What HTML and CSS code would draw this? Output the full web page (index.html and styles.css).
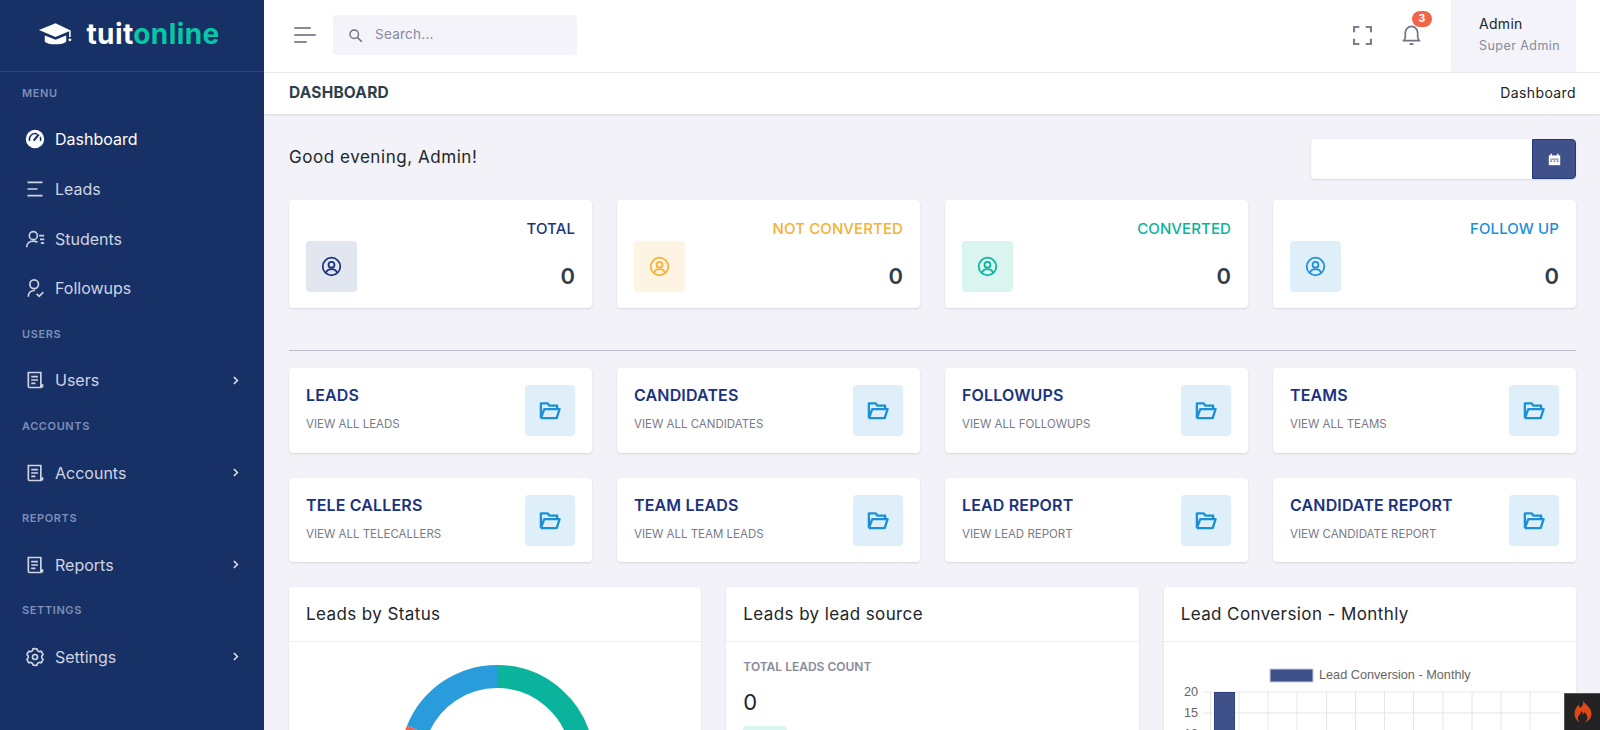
FILE: index.html
```html
<!DOCTYPE html>
<html lang="en">
<head>
<meta charset="utf-8">
<title>tuitonline - Dashboard</title>
<link rel="stylesheet" href="styles.css">
</head>
<body>
<svg class="defs" width="0" height="0" aria-hidden="true">
  <symbol id="i-user" viewBox="0 0 24 24"><circle cx="12" cy="12" r="10" fill="none" stroke="currentColor" stroke-width="2"/><circle cx="12" cy="10" r="3.4" fill="none" stroke="currentColor" stroke-width="2"/><path d="M5.6 19c1-2.600 3.400-4 6.400-4s5.400 1.400 6.400 4" fill="none" stroke="currentColor" stroke-width="2"/></symbol>
  <symbol id="i-folder" viewBox="0 0 24 24"><path d="M3 20V4.500h7l2 2.500h8v3.500" fill="none" stroke="currentColor" stroke-width="2.400" stroke-linejoin="round"/><path d="M3 20h16.500l3-9.500H6.500L3.500 19" fill="none" stroke="currentColor" stroke-width="2.400" stroke-linejoin="round"/></symbol>
  <symbol id="i-doc" viewBox="0 0 24 24"><path d="M19 17V3H4v16.500A1.500 1.500 0 0 0 5.500 21H20" fill="none" stroke="currentColor" stroke-width="2"/><path d="M7.500 8h8M7.500 12h8M7.500 16h5" stroke="currentColor" stroke-width="2"/><rect x="18" y="17" width="4" height="4" fill="currentColor"/></symbol>
  <symbol id="i-chev" viewBox="0 0 24 24"><path d="M9 5.500l6.500 6.500L9 18.500" fill="none" stroke="currentColor" stroke-width="2.800"/></symbol>
</svg>
<div class="app">
  <aside class="sidebar">
    <div class="logo">
      <svg class="logo-cap" viewBox="0 0 36 24"><path d="M18 1 1 8l17 7 14-5.800V15h1.600V8.500z" fill="#fff"/><path d="M7 13.500V20c3 3.500 19 3.500 22 0v-6.500l-11 4.500z" fill="#fff"/><circle cx="32.800" cy="18" r="1.500" fill="#fff"/></svg>
      <span class="logo-text">tuit<span class="logo-accent">online</span></span>
    </div>
    <nav class="nav">
      <div class="nav-label">MENU</div>
      <a class="nav-item active"><svg class="nav-icon" viewBox="0 0 24 24"><circle cx="12" cy="12" r="11" fill="currentColor"/><path d="M5.500 14.500a7 7 0 0 1 9-8.600M18.300 9.500a7 7 0 0 1 .2 5" fill="none" stroke="#173065" stroke-width="1.800"/><path d="M10.500 14l6-7.500" stroke="#173065" stroke-width="2.600"/></svg><span>Dashboard</span></a>
      <a class="nav-item"><svg class="nav-icon" viewBox="0 0 24 24"><path d="M3 4h18M3 12h12M3 20h18" stroke="currentColor" stroke-width="2" fill="none"/></svg><span>Leads</span></a>
      <a class="nav-item"><svg class="nav-icon" viewBox="0 0 24 24"><circle cx="10" cy="8" r="4.800" fill="none" stroke="currentColor" stroke-width="2"/><path d="M2 22c0-4.800 3.500-7.500 8-7.500 2 0 3.500.5 5 1.500" fill="none" stroke="currentColor" stroke-width="2"/><path d="M17 8h6M18 12.500h5M19 17h4" stroke="currentColor" stroke-width="2"/></svg><span>Students</span></a>
      <a class="nav-item"><svg class="nav-icon" viewBox="0 0 24 24"><circle cx="11" cy="7.500" r="5.200" fill="none" stroke="currentColor" stroke-width="2"/><path d="M4 22.500c0-4.500 3-7.500 8-7.500" fill="none" stroke="currentColor" stroke-width="2"/><path d="M14 19l3 3 5-5" fill="none" stroke="currentColor" stroke-width="2"/></svg><span>Followups</span></a>
      <div class="nav-label">USERS</div>
      <a class="nav-item"><svg class="nav-icon"><use href="#i-doc"/></svg><span>Users</span><svg class="nav-chev"><use href="#i-chev"/></svg></a>
      <div class="nav-label">ACCOUNTS</div>
      <a class="nav-item"><svg class="nav-icon"><use href="#i-doc"/></svg><span>Accounts</span><svg class="nav-chev"><use href="#i-chev"/></svg></a>
      <div class="nav-label">REPORTS</div>
      <a class="nav-item"><svg class="nav-icon"><use href="#i-doc"/></svg><span>Reports</span><svg class="nav-chev"><use href="#i-chev"/></svg></a>
      <div class="nav-label">SETTINGS</div>
      <a class="nav-item"><svg class="nav-icon" viewBox="0 0 24 24"><path d="M3.340 17a10.018 10.018 0 0 1-.978-2.326 3 3 0 0 0 .002-5.347A9.990 9.990 0 0 1 4.865 4.990a3 3 0 0 0 4.631-2.674 9.990 9.990 0 0 1 5.007.002 3 3 0 0 0 4.632 2.672c.579.59 1.093 1.261 1.525 2.010.433.749.757 1.530.978 2.326a3 3 0 0 0-.002 5.347 9.990 9.990 0 0 1-2.501 4.337 3 3 0 0 0-4.631 2.674 9.990 9.990 0 0 1-5.007-.002 3 3 0 0 0-4.632-2.672A10.018 10.018 0 0 1 3.340 17z" fill="none" stroke="currentColor" stroke-width="2" stroke-linejoin="round"/><circle cx="12" cy="12" r="3" fill="none" stroke="currentColor" stroke-width="2"/></svg><span>Settings</span><svg class="nav-chev"><use href="#i-chev"/></svg></a>
    </nav>
  </aside>
  <div class="main">
    <header class="topbar">
      <div class="hamburger"><i class="bar bar-a"></i><i class="bar bar-b"></i><i class="bar bar-c"></i></div>
      <label class="search">
        <svg class="search-icon" viewBox="0 0 24 24"><circle cx="10" cy="10" r="6.800" fill="none" stroke="currentColor" stroke-width="2.200"/><path d="M15 15l7 7" stroke="currentColor" stroke-width="2.400"/></svg>
        <input class="search-input" type="text" placeholder="Search...">
      </label>
      <div class="top-actions">
        <svg class="fs-icon" viewBox="0 0 18 18"><path d="M1 6V1h5M12 1h5v5M17 12v5h-5M6 17H1v-5" fill="none" stroke="currentColor" stroke-width="2"/></svg>
        <div class="bell">
          <svg class="bell-icon" viewBox="0 0 20 22"><path d="M1.500 16.500c1.500-1 2-2.500 2-4.500V8a6.500 6.500 0 0 1 13 0v4c0 2 .5 3.500 2 4.500z" fill="none" stroke="currentColor" stroke-width="1.800" stroke-linejoin="round"/><path d="M8 20h4" stroke="currentColor" stroke-width="2"/></svg>
          <span class="badge">3</span>
        </div>
        <div class="profile">
          <span class="profile-name">Admin</span>
          <span class="profile-role">Super Admin</span>
        </div>
      </div>
    </header>
    <div class="crumbs">
      <h1 class="crumb-title">DASHBOARD</h1>
      <span class="crumb-link">Dashboard</span>
    </div>
    <main class="content">
      <div class="greet-row">
        <p class="greet">Good evening, Admin!</p>
        <div class="date">
          <input class="date-input" type="text">
          <button class="date-btn" type="button"><svg viewBox="0 0 16 16" width="13" height="13"><path d="M1 3h14v12H1z" fill="#fff"/><path d="M4 1v3M12 1v3" stroke="#fff" stroke-width="1.800"/><path d="M3 7.500h10" stroke="#405189" stroke-width="1"/><path d="M3 10h2M7 10h2M11 10h2" stroke="#405189" stroke-width="1.800"/></svg></button>
        </div>
      </div>
      <section class="grid4">
        <div class="card stat"><div class="stat-title c-navy">TOTAL</div><div class="stat-row"><div class="ibox t-navy"><svg class="stat-icon"><use href="#i-user"/></svg></div><div class="stat-num">0</div></div></div>
        <div class="card stat"><div class="stat-title c-amber">NOT CONVERTED</div><div class="stat-row"><div class="ibox t-amber"><svg class="stat-icon"><use href="#i-user"/></svg></div><div class="stat-num">0</div></div></div>
        <div class="card stat"><div class="stat-title c-green">CONVERTED</div><div class="stat-row"><div class="ibox t-green"><svg class="stat-icon"><use href="#i-user"/></svg></div><div class="stat-num">0</div></div></div>
        <div class="card stat"><div class="stat-title c-blue">FOLLOW UP</div><div class="stat-row"><div class="ibox t-blue"><svg class="stat-icon"><use href="#i-user"/></svg></div><div class="stat-num">0</div></div></div>
      </section>
      <hr class="rule">
      <section class="grid4">
        <div class="card link"><div class="link-text"><div class="link-title">LEADS</div><div class="link-sub">VIEW ALL LEADS</div></div><div class="ibox t-blue"><svg class="folder-icon"><use href="#i-folder"/></svg></div></div>
        <div class="card link"><div class="link-text"><div class="link-title">CANDIDATES</div><div class="link-sub">VIEW ALL CANDIDATES</div></div><div class="ibox t-blue"><svg class="folder-icon"><use href="#i-folder"/></svg></div></div>
        <div class="card link"><div class="link-text"><div class="link-title">FOLLOWUPS</div><div class="link-sub">VIEW ALL FOLLOWUPS</div></div><div class="ibox t-blue"><svg class="folder-icon"><use href="#i-folder"/></svg></div></div>
        <div class="card link"><div class="link-text"><div class="link-title">TEAMS</div><div class="link-sub">VIEW ALL TEAMS</div></div><div class="ibox t-blue"><svg class="folder-icon"><use href="#i-folder"/></svg></div></div>
        <div class="card link"><div class="link-text"><div class="link-title">TELE CALLERS</div><div class="link-sub">VIEW ALL TELECALLERS</div></div><div class="ibox t-blue"><svg class="folder-icon"><use href="#i-folder"/></svg></div></div>
        <div class="card link"><div class="link-text"><div class="link-title">TEAM LEADS</div><div class="link-sub">VIEW ALL TEAM LEADS</div></div><div class="ibox t-blue"><svg class="folder-icon"><use href="#i-folder"/></svg></div></div>
        <div class="card link"><div class="link-text"><div class="link-title">LEAD REPORT</div><div class="link-sub">VIEW LEAD REPORT</div></div><div class="ibox t-blue"><svg class="folder-icon"><use href="#i-folder"/></svg></div></div>
        <div class="card link"><div class="link-text"><div class="link-title">CANDIDATE REPORT</div><div class="link-sub">VIEW CANDIDATE REPORT</div></div><div class="ibox t-blue"><svg class="folder-icon"><use href="#i-folder"/></svg></div></div>
      </section>
      <section class="grid3">
        <div class="card chart">
          <div class="chart-head">Leads by Status</div>
          <svg class="chart-svg" viewBox="0 0 412 240" width="412" height="240">
            <path d="M208 34.500A85.500 85.500 0 0 0 128.700 88" fill="none" stroke="#299cdb" stroke-width="23"/>
            <path d="M128.700 88A85.500 85.500 0 0 0 127.700 149" fill="none" stroke="#f06548" stroke-width="23"/>
            <path d="M208 34.500A85.500 85.500 0 1 1 127.700 149" fill="none" stroke="#0ab39c" stroke-width="23"/>
          </svg>
        </div>
        <div class="card chart">
          <div class="chart-head">Leads by lead source</div>
          <div class="source">
            <div class="source-label">TOTAL LEADS COUNT</div>
            <div class="source-num">0</div>
            <div class="source-row"><span class="pill">0%</span><span class="source-note">previous month</span></div>
          </div>
        </div>
        <div class="card chart">
          <div class="chart-head">Lead Conversion - Monthly</div>
          <svg class="chart-svg" viewBox="0 0 412 240" width="412" height="240">
            <rect x="106" y="27" width="43" height="13" fill="#405189" stroke="#c5cce0"/>
            <text class="chart-text" x="155" y="37">Lead Conversion - Monthly</text>
            <g stroke="#e6e6e6" stroke-width="1">
              <path d="M39 50H396M39 71H396M39 92H396"/>
              <path d="M46.500 50V240M75 50V240M104 50V240M133 50V240M162.500 50V240M191.500 50V240M220.500 50V240M249.500 50V240M279 50V240M308 50V240M337 50V240M366 50V240"/>
            </g>
            <rect x="50.500" y="50.500" width="20" height="190" fill="#405189" stroke="#2c3f7e"/>
            <text class="chart-tick" x="34" y="54">20</text>
            <text class="chart-tick" x="34" y="75">15</text>
            <text class="chart-tick" x="34" y="96">10</text>
          </svg>
        </div>
      </section>
    </main>
  </div>
</div>
<div class="flame">
  <svg viewBox="0 0 20 26" width="18" height="22"><path d="M10 0c1 4-1 6-3 8C5 6 5 5 5 4 2 7 0 10 0 15c0 5 3 9 7 10-2-1-3-3-3-5 0-3 3-4 4-8 2 1 1 3 2 4 1-1 1-2 1-3 3 2 5 5 4 8-.3 2-1.500 3-3 4 5-1 8-5 8-10 0-7-6-10-10-15z" fill="#dd4814"/></svg>
</div>
</body>
</html>
```
FILE: styles.css
```css
* { box-sizing: border-box; }
html, body { margin: 0; height: 100%; overflow: hidden; }
body { font-family: Inter, "Liberation Sans", sans-serif; background: #f2f2f8; color: #212529; }
.defs { position: absolute; }
.app { display: flex; height: 730px; overflow: hidden; }

.sidebar { width: 264px; flex: none; background: #173065; }
.logo { height: 72px; display: flex; align-items: center; justify-content: center; gap: 13px; border-bottom: 1px solid #2b4680; padding: 0 6px 3px 0; }
.logo-cap { width: 35px; height: 24px; }
.logo-text { font: 700 28px/1 Inter, sans-serif; color: #fff; letter-spacing: .4px; }
.logo-accent { color: #06c8a5; }
.nav-label { height: 42.400px; padding-left: 22px; display: flex; align-items: center; font: 600 11px/1 Inter, sans-serif; letter-spacing: .6px; color: #7e8fba; }
.nav-label:first-child { height: 42.500px; }
.nav-item { height: 49.700px; display: flex; align-items: center; padding-left: 25px; font-size: 16px; color: #cfd4e4; }
.nav-item.active { color: #fff; }
.nav-icon { width: 20px; height: 20px; flex: none; margin-right: 10px; }
.nav-chev { width: 13px; height: 13px; margin-left: auto; margin-right: 22px; color: #e4e7f0; }

.main { flex: 1; min-width: 0; display: flex; flex-direction: column; }
.topbar { height: 72px; flex: none; background: #fff; display: flex; align-items: center; padding: 0 24px 0 30px; }
.hamburger { width: 22px; display: flex; flex-direction: column; gap: 5px; margin: 0 17px 2px 0; }
.bar { display: block; height: 2px; background: #878a99; border-radius: 1px; }
.bar-a { width: 17px; }
.bar-b { width: 22px; }
.bar-c { width: 13px; }
.search { width: 244px; height: 40px; margin-bottom: 2px; background: #f3f3f9; border-radius: 4px; display: flex; align-items: center; padding-left: 15px; color: #6d7080; }
.search-icon { width: 15px; height: 15px; flex: none; margin-right: 12px; }
.search-input { flex: 1; min-width: 0; border: 0; background: none; outline: 0; padding: 0 0 2px; font: 400 13.500px Inter, sans-serif; letter-spacing: .25px; }
.search-input::placeholder { color: #878a99; opacity: 1; }
.top-actions { margin-left: auto; display: flex; align-items: center; height: 100%; }
.fs-icon { width: 19px; height: 19px; color: #7a7e8e; margin: 0 30px 2px 0; }
.bell { position: relative; width: 19px; height: 21px; margin: 0 30px 2px 0; color: #6f7383; }
.bell-icon { width: 19px; height: 21px; display: block; }
.badge { position: absolute; left: 10px; top: -14px; width: 20px; height: 16px; border-radius: 8px; background: #f06548; color: #fff; font: 700 10.500px/16px Inter, sans-serif; text-align: center; }
.profile { width: 125px; height: 100%; background: #f3f3f9; padding: 0 0 3px 28px; display: flex; flex-direction: column; justify-content: center; gap: 4px; }
.profile-name { font-size: 14px; line-height: 18px; font-weight: 400; letter-spacing: .3px; color: #212529; }
.profile-role { font-size: 12.500px; line-height: 17px; color: #878a99; letter-spacing: .45px; }

.crumbs { height: 42px; flex: none; background: #fff; border-top: 1px solid #e9ebf0; box-shadow: 0 1px 2px rgba(56, 65, 74, .15); display: flex; align-items: center; justify-content: space-between; padding: 0 24px 0 25px; position: relative; }
.crumb-title { margin: 0 0 2px; font-size: 15.500px; font-weight: 700; letter-spacing: .2px; color: #2f3f4a; }
.crumb-link { margin-bottom: 2px; font-size: 14px; color: #212529; letter-spacing: .4px; }

.content { padding: 25px 24px 24px 25px; }
.greet-row { display: flex; justify-content: space-between; align-items: center; height: 40px; margin-bottom: 21px; }
.greet { margin: 0 0 4px; font-size: 17px; font-weight: 400; color: #212529; letter-spacing: .55px; }
.date { width: 265px; height: 40px; display: flex; border-radius: 4px; background: #fff; box-shadow: 0 1px 2px rgba(56, 65, 74, .15); }
.date-input { flex: 1; min-width: 0; border: 0; background: none; outline: 0; }
.date-btn { width: 44px; border: 1px solid #1f3a82; border-radius: 0 4px 4px 0; background: #405189; display: flex; align-items: center; justify-content: center; padding: 0; }

.grid4 { display: grid; grid-template-columns: repeat(4, 1fr); gap: 25px; }
.grid3 { display: grid; grid-template-columns: repeat(3, 1fr); gap: 25px; margin-top: 25px; }
.card { background: #fff; border-radius: 4px; box-shadow: 0 1px 2px rgba(56, 65, 74, .15); }
.stat { height: 108px; padding: 17px; }
.stat-title { height: 23.500px; text-align: right; font-size: 15px; line-height: 23px; font-weight: 500; letter-spacing: .1px; }
.stat-row { display: flex; justify-content: space-between; align-items: flex-end; }
.stat-num { padding-bottom: 2px; font-size: 22px; line-height: 28px; font-weight: 600; color: #2f3f4a; }
.ibox { width: 50.500px; height: 51px; border-radius: 4px; display: flex; align-items: center; justify-content: center; flex: none; }
.stat-icon { width: 21px; height: 21px; }
.folder-icon { width: 23px; height: 23px; }
.c-navy { color: #1b3280; }
.c-amber { color: #f7b031; }
.c-green { color: #0ab39c; }
.c-blue { color: #1b90d8; }
.t-navy { background: #e2e6ef; color: #1b3280; }
.t-amber { background: #fef4e4; color: #f7b031; }
.t-green { background: #daf4f0; color: #0ab39c; }
.t-blue { background: #dfeff9; color: #1b90d8; }

.rule { margin: 42px 0 17px; border: 0; border-top: 1px solid #bfbfcb; }
.link { height: 84.600px; padding: 17px; display: flex; justify-content: space-between; }
.link-title { font-size: 16px; line-height: 21px; font-weight: 600; color: #1b3280; letter-spacing: .15px; }
.link-sub { margin-top: 10px; font-size: 11.500px; line-height: 16px; color: #777b8b; }

.chart { height: 300px; overflow: hidden; }
.chart-head { height: 55px; border-bottom: 1px solid #eceef3; padding: 0 17px; display: flex; align-items: center; font-size: 17px; font-weight: 400; color: #212529; letter-spacing: .4px; }
.chart-svg { display: block; }
.chart-text { font: 12.700px "Liberation Sans", Arial, sans-serif; fill: #666; }
.chart-tick { font: 12.700px "Liberation Sans", Arial, sans-serif; fill: #666; text-anchor: end; }
.source { padding: 16px 17px; }
.source-label { font-size: 12px; line-height: 18px; font-weight: 600; color: #878a99; }
.source-num { margin-top: 11px; font-size: 22px; line-height: 30px; font-weight: 400; color: #212529; }
.source-row { display: flex; align-items: center; margin-top: 9px; }
.pill { width: 44px; padding: 5px 0; background: #daf4f0; border-radius: 4px; color: #0ab39c; font-size: 12px; text-align: center; }
.source-note { margin-left: 25px; font-size: 14px; letter-spacing: .4px; color: #878a99; }

.flame { position: fixed; right: 0; bottom: 0; width: 36px; height: 37px; background: #232323; border: 1px solid #555; border-right: 0; border-bottom: 0; display: flex; align-items: center; justify-content: center; }
```
